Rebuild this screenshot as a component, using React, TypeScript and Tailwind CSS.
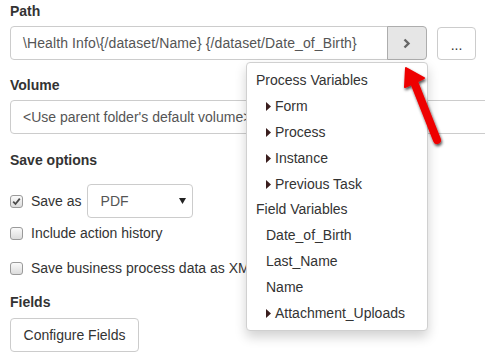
import { ReactNode } from 'react';

const font = { fontFamily: '"Liberation Sans", Arial, sans-serif' };

function Label({ children, className = '' }: { children: ReactNode; className?: string }) {
    return <div className={`h-5 leading-5 text-[14px] font-bold text-[#333] ${className}`}>{children}</div>;
}

function Checkbox({ checked }: { checked?: boolean }) {
    return (
        <div className="w-[13px] h-[13px] shrink-0 rounded-[3px] border border-[#9a9a9a] bg-gradient-to-b from-[#fafafa] to-[#dcdcdc] flex items-center justify-center">
            {checked && (
                <svg width="9" height="9" viewBox="0 0 9 9">
                    <path d="M1.2 4.6 L3.5 7 L7.8 1.6" fill="none" stroke="#4a4a4a" strokeWidth="1.8" />
                </svg>
            )}
        </div>
    );
}

function Tri() {
    return (
        <svg width="5" height="9" viewBox="0 0 5 9" className="mr-[4px]">
            <path d="M0 0 L5 4.5 L0 9 Z" fill="#3a1e1e" />
        </svg>
    );
}

const menu: { text: string; indent?: boolean; tri?: boolean }[] = [
    { text: 'Process Variables' },
    { text: 'Form', indent: true, tri: true },
    { text: 'Process', indent: true, tri: true },
    { text: 'Instance', indent: true, tri: true },
    { text: 'Previous Task', indent: true, tri: true },
    { text: 'Field Variables' },
    { text: 'Date_of_Birth', indent: true },
    { text: 'Last_Name', indent: true },
    { text: 'Name', indent: true },
    { text: 'Attachment_Uploads', indent: true, tri: true },
];

export default function App() {
    return (
        <div className="relative w-[485px] h-[362px] overflow-hidden bg-white" style={font}>
            <div className="pl-[10px] pt-[1px]">
                <Label>Path</Label>
                <div className="mt-[5px] flex items-center">
                    <div className="w-[378px] h-[34px] border border-[#ccc] rounded-l-[4px] pl-3 flex items-center text-[14px] tracking-[0.1px] text-[#555] whitespace-nowrap overflow-hidden">
                        \Health Info\{'{'}/dataset/Name{'}'} {'{'}/dataset/Date_of_Birth{'}'}
                    </div>
                    <div className="w-[40px] h-[34px] -ml-px border border-[#adadad] bg-[#e6e6e6] rounded-r-[4px] flex items-center justify-center">
                        <svg width="8" height="11" viewBox="0 0 8 11">
                            <path d="M1.5 1.5 L5.5 5.5 L1.5 9.5" fill="none" stroke="#666" strokeWidth="2.4" />
                        </svg>
                    </div>
                    <div className="ml-[10px] w-[39px] h-[33px] border border-[#ccc] rounded-[4px] flex items-center justify-center text-[14px] text-[#333] leading-none pt-[3px]">
                        ...
                    </div>
                </div>

                <Label className="mt-[15px]">Volume</Label>
                <div className="mt-[5px] w-[520px] h-[34px] border border-[#ccc] rounded-[4px] pl-3 flex items-center text-[14px] text-[#555] whitespace-nowrap">
                    &lt;Use parent folder's default volume&gt;
                </div>

                <Label className="mt-[16px]">Save options</Label>
                <div className="mt-[14px] h-[34px] flex items-center">
                    <Checkbox checked />
                    <span className="ml-[8px] text-[14px] text-[#333]">Save as</span>
                    <div className="ml-[5px] w-[106px] h-[34px] border border-[#ccc] rounded-[4px] flex items-center justify-between pl-[13px] pr-[6px] text-[14px] text-[#555]">
                        <span>PDF</span>
                        <svg width="7" height="6" viewBox="0 0 7 6">
                            <path d="M0 0 L7 0 L3.5 6 Z" fill="#222" />
                        </svg>
                    </div>
                </div>
                <div className="mt-[5px] h-5 flex items-center">
                    <Checkbox />
                    <span className="ml-[8px] text-[14px] text-[#333]">Include action history</span>
                </div>
                <div className="mt-[15px] h-5 flex items-center whitespace-nowrap">
                    <Checkbox />
                    <span className="ml-[8px] text-[14px] text-[#333]">Save business process data as XML</span>
                </div>

                <Label className="mt-[14px]">Fields</Label>
                <div className="mt-[6px] w-[129px] h-[34px] border border-[#ccc] rounded-[4px] flex items-center justify-center text-[14px] text-[#333]">
                    Configure Fields
                </div>
            </div>

            {/* dropdown menu */}
            <div className="absolute left-[246px] top-[62px] w-[182px] h-[269px] bg-white border border-[#d0d0d0] rounded-[4px] shadow-[0_6px_12px_rgba(0,0,0,0.18)] pt-[4px]">
                {menu.map((m, i) => (
                    <div
                        key={m.text}
                        className={`${i === 5 ? 'h-[25px]' : 'h-[26px]'} flex items-center text-[14px] text-[#333] whitespace-nowrap ${m.indent ? 'pl-[19px]' : 'pl-[9px]'}`}
                    >
                        {m.tri && <Tri />}
                        {m.text}
                    </div>
                ))}
            </div>

            {/* red arrow */}
            <svg className="absolute left-[396px] top-[60px]" width="60" height="95" viewBox="0 0 60 95">
                <defs>
                    <filter id="sh" x="-30%" y="-30%" width="160%" height="160%">
                        <feDropShadow dx="1" dy="2" stdDeviation="1.5" floodColor="#000" floodOpacity="0.7" />
                    </filter>
                </defs>
                <g filter="url(#sh)">
                    <line x1="18" y1="22" x2="41" y2="80" stroke="#ee0000" strokeWidth="8" strokeLinecap="round" />
                    <path d="M10 8 L28 18 L9 27 Z" fill="#ee0000" stroke="#ee0000" strokeWidth="2" strokeLinejoin="round" />
                </g>
            </svg>
        </div>
    );
}
